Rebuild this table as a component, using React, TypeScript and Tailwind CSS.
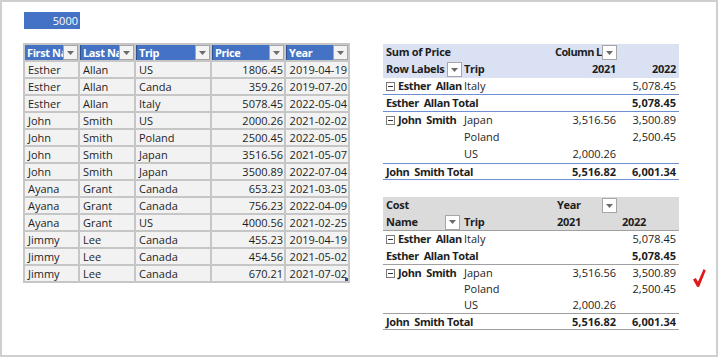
import React from 'react';

const data = [
  ['Esther', 'Allan', 'US', '1806.45', '2019-04-19'],
  ['Esther', 'Allan', 'Canda', '359.26', '2019-07-20'],
  ['Esther', 'Allan', 'Italy', '5078.45', '2022-05-04'],
  ['John', 'Smith', 'US', '2000.26', '2021-02-02'],
  ['John', 'Smith', 'Poland', '2500.45', '2022-05-05'],
  ['John', 'Smith', 'Japan', '3516.56', '2021-05-07'],
  ['John', 'Smith', 'Japan', '3500.89', '2022-07-04'],
  ['Ayana', 'Grant', 'Canada', '653.23', '2021-03-05'],
  ['Ayana', 'Grant', 'Canada', '756.23', '2022-04-09'],
  ['Ayana', 'Grant', 'US', '4000.56', '2021-02-25'],
  ['Jimmy', 'Lee', 'Canada', '455.23', '2019-04-19'],
  ['Jimmy', 'Lee', 'Canada', '454.56', '2021-05-02'],
  ['Jimmy', 'Lee', 'Canada', '670.21', '2021-07-02'],
];

const headers = ['First Name', 'Last Name', 'Trip', 'Price', 'Year'];

function Arrow({ white }: { white?: boolean }) {
  return (
    <div
      className={`w-[15px] h-[15px] shrink-0 flex items-center justify-center border border-[#a6a6a6] ${
        white ? 'bg-white' : 'bg-[#f3f3f3]'
      }`}
    >
      <svg width="7" height="4" viewBox="0 0 7 4">
        <path d="M0 0 L7 0 L3.5 4 Z" fill="#6b6b6b" />
      </svg>
    </div>
  );
}

function Minus() {
  return (
    <div className="w-[9px] h-[9px] border border-[#7a7a7a] bg-white flex items-center justify-center mr-[3px] shrink-0">
      <div className="w-[5px] h-[1px] bg-[#333]" />
    </div>
  );
}

function DataTable() {
  return (
    <div className="grid grid-cols-[53px_54px_74px_72px_62px] gap-[2px] bg-[#c6c6c6] p-[2px] w-fit">
      {headers.map((h, i) => (
        <div key={h} className="h-[15px] bg-[#4472c4] flex items-center">
          <span
            className={`flex-1 min-w-0 overflow-hidden whitespace-nowrap font-bold text-white pl-[2px] leading-[15px] tracking-[-0.4px] ${
              i > 0 ? 'border-l border-[#2f528f]' : ''
            }`}
          >
            {h}
          </span>
          <Arrow />
        </div>
      ))}
      {data.map((r, ri) =>
        r.map((c, ci) => (
          <div
            key={ri + '-' + ci}
            className={`h-[15px] bg-[#f2f2f2] leading-[15px] whitespace-nowrap overflow-hidden text-[#1e1e1e] relative ${
              ci >= 3 ? 'text-right pr-[1px]' : 'pl-[3px]'
            }`}
          >
            {c}
            {ri === data.length - 1 && ci === 4 && (
              <div className="absolute right-0 bottom-0 w-[3px] h-[3px] bg-[#2f5597]" />
            )}
          </div>
        ))
      )}
    </div>
  );
}

const cols = 'grid grid-cols-[80px_94px_62px_60px]';

function PivotRow({
  label,
  trip,
  a,
  b,
  bold,
  minus,
  line,
  h = 'h-[17px]',
}: {
  label?: string;
  trip?: string;
  a?: string;
  b?: string;
  bold?: boolean;
  minus?: boolean;
  line?: string;
  h?: string;
}) {
  return (
    <div className={`${cols} ${h} items-center ${line ?? ''} ${bold ? 'font-bold' : ''}`}>
      <div className="flex items-center pl-[3px] whitespace-pre overflow-visible">
        {minus && <Minus />}
        {label && <span className={`whitespace-pre tracking-[-0.4px] ${minus || bold ? 'font-bold' : ''}`}>{label}</span>}
      </div>
      <div className="pl-[1px] whitespace-nowrap">{trip}</div>
      <div className="text-right pr-[3px]">{a}</div>
      <div className="text-right pr-[3px]">{b}</div>
    </div>
  );
}

function PivotPrice() {
  const ln = 'border-[#6e8fd0]';
  return (
    <div className="w-[296px]">
      <div className="bg-[#d9e1f2] font-bold tracking-[-0.3px]">
        <div className={`${cols} h-[17px] items-center`}>
          <div className="pl-[3px] col-span-2 whitespace-nowrap">Sum of Price</div>
          <div className="flex items-center pr-[2px] -ml-[2px]">
            <span className="flex-1 min-w-0 overflow-hidden whitespace-nowrap tracking-[-0.6px]">Column Labels</span>
            <Arrow white />
          </div>
          <div />
        </div>
        <div className={`${cols} h-[17px] items-center`}>
          <div className="flex items-center justify-between pl-[3px] pr-[1px] whitespace-nowrap">
            <span className="whitespace-nowrap">Row Labels</span>
            <Arrow white />
          </div>
          <div className="pl-[1px]">Trip</div>
          <div className="text-right pr-[3px]">2021</div>
          <div className="text-right pr-[3px]">2022</div>
        </div>
      </div>
      <PivotRow minus label="Esther  Allan" trip="Italy" b="5,078.45" line={`border-b ${ln}`} />
      <PivotRow bold label="Esther  Allan Total" b="5,078.45" line={`border-b ${ln}`} />
      <PivotRow minus label="John  Smith" trip="Japan" a="3,516.56" b="3,500.89" />
      <PivotRow trip="Poland" b="2,500.45" />
      <PivotRow trip="US" a="2,000.26" />
      <PivotRow bold label="John  Smith Total" a="5,516.82" b="6,001.34" line={`border-y ${ln}`} />
    </div>
  );
}

function PivotCost() {
  const ln = 'border-[#a0a0a0]';
  return (
    <div className="w-[296px] mt-[17px]">
      <div className={`bg-[#dbdbdb] font-bold border-b tracking-[-0.3px] ${ln}`}>
        <div className={`${cols} h-[17px] items-center`}>
          <div className="pl-[3px] col-span-2">Cost</div>
          <div className="flex items-center justify-between pr-[2px]">
            <span>Year</span>
            <Arrow white />
          </div>
          <div />
        </div>
        <div className={`${cols} h-[16px] items-center`}>
          <div className="flex items-center justify-between pl-[3px] pr-[3px]">
            <span>Name</span>
            <Arrow white />
          </div>
          <div className="pl-[1px]">Trip</div>
          <div>2021</div>
          <div className="pl-[3px]">2022</div>
        </div>
      </div>
      <PivotRow minus label="Esther  Allan" trip="Italy" b="5,078.45" />
      <PivotRow bold label="Esther  Allan Total" b="5,078.45" line={`border-b ${ln}`} />
      <PivotRow minus label="John  Smith" trip="Japan" a="3,516.56" b="3,500.89" h="h-[16px]" />
      <PivotRow trip="Poland" b="2,500.45" h="h-[16px]" />
      <PivotRow trip="US" a="2,000.26" h="h-[16px]" />
      <PivotRow bold label="John  Smith Total" a="5,516.82" b="6,001.34" line={`border-y ${ln}`} />
    </div>
  );
}

export default function App() {
  return (
    <div
      className="w-[718px] h-[357px] border-2 border-[#cfcfcf] bg-white relative pl-[21px] pt-[10px] text-[11px] text-[#1e1e1e]"
      style={{ fontFamily: '"Open Sans", "Liberation Sans", sans-serif' }}
    >
      <div className="ml-[1px] w-[56px] h-[17px] bg-[#4472c4] text-white text-right pr-[2px] leading-[17px]">5000</div>
      <div className="flex items-start mt-[14px]">
        <DataTable />
        <div className="ml-[33px] mt-[1px]">
          <PivotPrice />
          <PivotCost />
        </div>
      </div>
      <svg className="absolute left-[690px] top-[266px]" width="14" height="20" viewBox="0 0 14 20">
        <path d="M1 11.5 L3.8 10 L6 13.8 L11.6 1 L13.8 2.4 L7.2 18.8 L5.2 19 Z" fill="#e01818" />
      </svg>
    </div>
  );
}
